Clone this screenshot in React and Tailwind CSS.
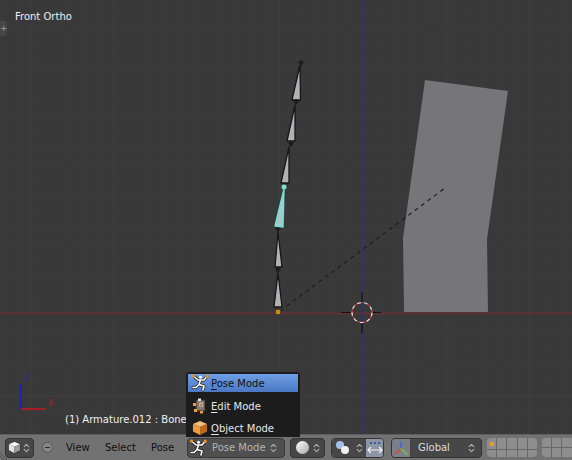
import React from 'react';
import { ChevronUp, ChevronDown } from 'lucide-react';

const font = { fontFamily: '"DejaVu Sans", sans-serif' };

function Updown({ className = 'text-[#a8a8a8]' }) {
    return (
        <span className={`flex flex-col items-center shrink-0 -space-y-[4px] ${className}`}>
            <ChevronUp size={9} strokeWidth={3.5} />
            <ChevronDown size={9} strokeWidth={3.5} />
        </span>
    );
}

function CubeIcon({ size = 16, light = false }) {
    const top = light ? '#f6f6f6' : '#f4bd78';
    const left = light ? '#e2e2e2' : '#eb9a3c';
    const right = light ? '#9a9a9a' : '#b86a20';
    return (
        <svg width={size} height={size} viewBox="0 0 16 16">
            <path d="M8 1 L15 4 L15 11.5 L8 15 L1 11.5 L1 4 Z" fill="#222" stroke="#222" strokeWidth="1.2" strokeLinejoin="round" />
            <path d="M8 1 L15 4 L8 7 L1 4 Z" fill={top} />
            <path d="M1 4 L8 7 L8 15 L1 11.5 Z" fill={left} />
            <path d="M15 4 L8 7 L8 15 L15 11.5 Z" fill={right} />
        </svg>
    );
}

function PoseIcon() {
    const figure = 'M3 2.5 L7 6 L13 6 L16 2.5 M9.5 6 L8 10.5 L13 12 L12 16 M8 10.5 L5 13.5 L2 13.5';
    return (
        <svg width="18" height="18" viewBox="0 0 18 18" fill="none" className="shrink-0">
            <path d={figure} stroke="#1d1d1d" strokeWidth="3" strokeLinecap="round" strokeLinejoin="round" />
            <path d={figure} stroke="#ffffff" strokeWidth="1.6" strokeLinecap="round" strokeLinejoin="round" />
            <circle cx="9.5" cy="3.2" r="1.5" fill="#ffffff" />
            <circle cx="2.5" cy="2" r="1.7" fill="#e0932f" />
            <circle cx="16.2" cy="2.2" r="1.7" fill="#e0932f" />
        </svg>
    );
}

function EditIcon() {
    return (
        <svg width="16" height="16" viewBox="0 0 16 16">
            <path d="M4 2 L13 2 L13 13 L4 13 Z" fill="#85796f" stroke="#2a2a2a" />
            <path d="M7 4.5 L11 4.5 L11 9 L7 9 Z" fill="#b9ab9c" />
            <rect x="1" y="5" width="3" height="3" fill="#ef9f40" />
            <rect x="6" y="0.5" width="3" height="2.5" fill="#e8e8e8" />
            <rect x="2" y="11" width="3" height="3" fill="#ef9f40" />
            <rect x="8" y="13" width="3" height="2.5" fill="#ef9f40" />
            <rect x="8" y="6" width="2" height="2" fill="#d9732a" />
        </svg>
    );
}

function Bone({ d }) {
    return <path d={d} fill="#b3b1b6" stroke="#161616" strokeWidth="1.3" strokeLinejoin="round" />;
}

function Joint({ x, y }) {
    return <path d={`M${x - 3} ${y - 1} L${x} ${y - 3} L${x + 3} ${y - 1} L${x} ${y + 3} Z`} fill="#1d1d1d" />;
}

function Scene() {
    return (
        <svg className="absolute inset-0" width="572" height="434" viewBox="0 0 572 434">
            <defs>
                <pattern id="minor" width="16.6" height="16.6" patternUnits="userSpaceOnUse" x="0" y="13">
                    <path d="M16.6 0 L0 0 L0 16.6" fill="none" stroke="#3c3c3c" strokeWidth="1" />
                </pattern>
                <pattern id="major" width="83" height="83" patternUnits="userSpaceOnUse" x="30" y="64">
                    <path d="M83 0 L0 0 L0 83" fill="none" stroke="#424242" strokeWidth="1" />
                </pattern>
            </defs>
            <rect width="572" height="434" fill="url(#minor)" />
            <rect width="572" height="434" fill="url(#major)" />

            <path d="M0 313.5 H572" stroke="#6b2f33" strokeWidth="1.5" />
            <path d="M362 0 V434" stroke="#2f2f7c" strokeWidth="1.5" />

            {/* mesh */}
            <path d="M425 80 L508 91 L487 239 L488 312 L404 312 L403 238 Z" fill="#767579" />

            {/* relationship line */}
            <path d="M280 311 L445 188" stroke="#1e1e1e" strokeWidth="1.2" strokeDasharray="4 4" fill="none" />

            {/* bones */}
            <Bone d="M300 65 L292 100 L300.5 100 Z" />
            <Bone d="M295 105 L287 141 L295 141 Z" />
            <Bone d="M289 147 L281 183 L289 183 Z" />
            <Bone d="M278 232 L275 267 L282 267 Z" />
            <Bone d="M278 273 L274 307 L282 307 Z" />
            <Joint x={301} y={63} />
            <Joint x={296} y={102} />
            <Joint x={291} y={144} />
            <Joint x={278} y={229} />
            <Joint x={278} y={270} />
            <circle cx="284" cy="187" r="2.5" fill="#7fe0d0" />
            <path d="M284 189 L275 226 L283 227 Z" fill="#a4c9cb" stroke="#6fe3d6" strokeWidth="1.4" strokeLinejoin="round" />
            <circle cx="278" cy="312" r="3" fill="#c9851f" stroke="#2a2a2a" strokeWidth="0.8" />

            {/* 3d cursor */}
            <path d="M341 312.5 H352 M372 312.5 H381 M362 292 V302 M362 323 V333" stroke="#111" strokeWidth="1.2" />
            <circle cx="362" cy="312.5" r="10" fill="none" stroke="#f2f2f2" strokeWidth="1.2" strokeDasharray="4 3" />
            <circle cx="362" cy="312.5" r="10" fill="none" stroke="#c23a3a" strokeWidth="1.2" strokeDasharray="3 4" strokeDashoffset="3.5" />

            {/* axis widget */}
            <path d="M21 409 V384" stroke="#1f1fc0" strokeWidth="2" />
            <path d="M21 409 H46" stroke="#a81c24" strokeWidth="2" />
        </svg>
    );
}

function Viewport() {
    return (
        <div className="relative flex-1 bg-[#393939] overflow-hidden">
            <Scene />
            <span className="absolute left-[15px] top-[10px] text-[10px] leading-[14px] text-[#f0f0f0]">Front Ortho</span>
            <span className="absolute left-0 top-[21px] w-[7px] h-[15px] bg-[#474747] rounded-r-sm text-[9px] leading-[15px] text-[#999] text-center">+</span>
            <span className="absolute left-[24px] top-[374px] text-[8px] leading-none text-[#2a2a9a]">Z</span>
            <span className="absolute left-[48px] top-[400px] text-[8px] leading-none text-[#a81c24]">X</span>
            <span className="absolute left-[65px] top-[413px] text-[10px] leading-[14px] text-[#f0f0f0] whitespace-nowrap">(1) Armature.012 : Bone.0</span>
        </div>
    );
}

function MenuRow({ icon, first, rest, active }) {
    return (
        <div className={`flex items-center ${active ? 'h-[18px] mb-[3px] bg-gradient-to-b from-[#6f9fe6] to-[#4a78c4] text-[#111]' : 'h-[22px] text-[#e6e6e6]'}`}>
            <span className="w-[23px] flex justify-center">{icon}</span>
            <span className="text-[10px] whitespace-nowrap">
                <span className="underline underline-offset-2">{first}</span>{rest}
            </span>
        </div>
    );
}

function ModeMenu() {
    return (
        <div className="absolute left-[186px] top-[372px] w-[114px] h-[65px] bg-[#1c1c1c] rounded-t-[4px] p-[2px] z-10 overflow-hidden">
            <MenuRow icon={<PoseIcon />} first="P" rest="ose Mode" active />
            <MenuRow icon={<EditIcon />} first="E" rest="dit Mode" />
            <MenuRow icon={<CubeIcon />} first="O" rest="bject Mode" />
        </div>
    );
}

function LayerGrid({ cols, mark, className = '' }) {
    const cells = Array.from({ length: cols * 2 }, (_, i) => i);
    return (
        <div className={`grid grid-cols-5 gap-px bg-[#686868] rounded-[4px] overflow-hidden w-[50px] h-[19px] shrink-0 ${className}`}>
            {cells.map((i) => (
                <div key={i} className="bg-[#8e8e8e] flex items-center justify-center">
                    {mark && i === 0 && <span className="w-[4px] h-[4px] bg-[#e0a030]" />}
                </div>
            ))}
        </div>
    );
}

function Header() {
    return (
        <div className="relative h-[26px] shrink-0 bg-[#727272] border-t border-[#5f5f5f] flex items-center text-[10px] text-[#101010] overflow-hidden">
            <svg className="absolute left-0 bottom-0" width="9" height="9" viewBox="0 0 9 9" stroke="#4a4a4a" strokeWidth="1">
                <path d="M0 2 L7 9 M0 5 L4 9" />
            </svg>
            <button className="ml-[5px] w-[29px] h-[20px] shrink-0 rounded-[4px] bg-[#474747] border border-[#333] flex items-center justify-center gap-[1px]">
                <CubeIcon size={13} light />
                <Updown />
            </button>
            <span className="ml-[8px] w-[11px] h-[11px] shrink-0 rounded-full border border-[#5a5a5a] bg-[#868686] flex items-center justify-center">
                <span className="w-[5px] h-px bg-[#2a2a2a]" />
            </span>
            <nav className="ml-[13px] flex w-[109px] shrink-0">
                <span className="w-[39px]">View</span>
                <span className="w-[46px]">Select</span>
                <span>Pose</span>
            </nav>
            <button className="ml-[12px] w-[98px] h-[20px] shrink-0 rounded-[4px] bg-[#4f4f4f] border border-[#3a3a3a] flex items-center pl-[1px] pr-[6px] text-[#b4b4b4]">
                <PoseIcon />
                <span className="ml-[5px] flex-1 text-left whitespace-nowrap">Pose Mode</span>
                <Updown />
            </button>
            <button className="ml-[5px] w-[35px] h-[20px] shrink-0 rounded-[4px] bg-[#474747] border border-[#333] flex items-center pl-[5px] pr-[3px] justify-between">
                <span className="w-[13px] h-[13px] rounded-full bg-gradient-to-br from-white to-[#a8a8a8]" />
                <Updown />
            </button>
            <div className="ml-[6px] flex h-[20px] w-[53px] shrink-0 rounded-[4px] border border-[#333] overflow-hidden">
                <span className="w-[34px] bg-[#474747] flex items-center pl-[3px] justify-between pr-[2px]">
                    <svg width="15" height="15" viewBox="0 0 15 15">
                        <circle cx="5" cy="5" r="4" fill="#a8bfe8" />
                        <circle cx="10" cy="10" r="4" fill="#f0f0f0" />
                    </svg>
                    <Updown />
                </span>
                <span className="flex-1 bg-[#8c95a3] flex items-center justify-center">
                    <svg width="16" height="16" viewBox="0 0 16 16" fill="none" stroke="#f4f4f4" strokeWidth="1.2">
                        <path d="M3 3 H5 M7 3 H9 M11 3 H13" strokeWidth="2" stroke="#3c5a9a" />
                        <path d="M1 10 H15 M4 7 L1 10 L4 13 M12 7 L15 10 L12 13" />
                    </svg>
                </span>
            </div>
            <div className="ml-[7px] flex items-center w-[91px] h-[20px] shrink-0 rounded-[4px] bg-[#474747] border border-[#333] overflow-hidden pr-[5px] text-[#dcdcdc]">
                <span className="w-[18px] h-full bg-[#7a7f88] flex items-center justify-center shrink-0">
                    <svg width="16" height="16" viewBox="0 0 16 16" fill="none" strokeWidth="1.6" strokeLinecap="round">
                        <path d="M8 9 V2" stroke="#3f6fd8" />
                        <path d="M8 9 L2 14" stroke="#d8463a" />
                        <path d="M8 9 L14 14" stroke="#7fbf3a" />
                    </svg>
                </span>
                <span className="ml-[8px] flex-1 text-left">Global</span>
                <Updown />
            </div>
            <LayerGrid cols={5} mark className="ml-[5px]" />
            <LayerGrid cols={5} className="ml-[5px]" />
        </div>
    );
}

export default function App() {
    return (
        <div className="relative w-[572px] h-[460px] flex flex-col overflow-hidden" style={font}>
            <Viewport />
            <Header />
            <ModeMenu />
        </div>
    );
}
